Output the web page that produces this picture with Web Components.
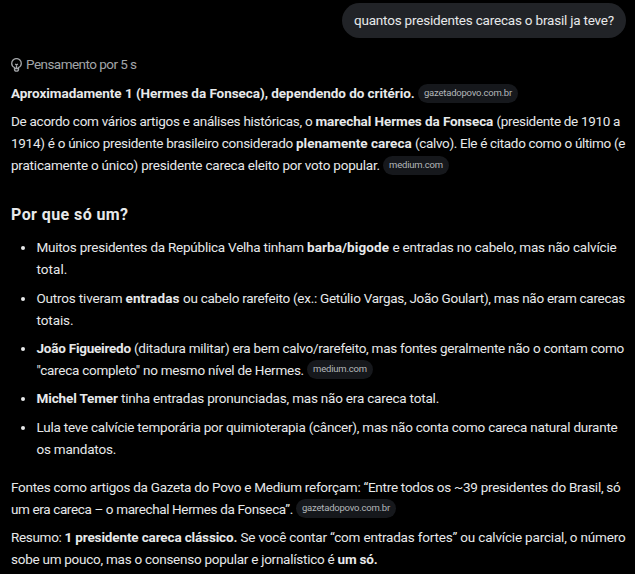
<!DOCTYPE html>
<html lang="pt-BR">
<head>
<meta charset="utf-8">
<title>Chat</title>
<style>
  body {
    margin: 0;
    height: 574px;
    overflow: hidden;
    background: #000;
    color: #e7e9ea;
    font: 13.5px/22px Roboto, "Liberation Sans", sans-serif;
  }
</style>
</head>
<body>
<chat-thread>
  <user-bubble><text-run width="260">quantos presidentes carecas o brasil ja teve?</text-run></user-bubble>
  <thought-row><text-run width="110.5">Pensamento por 5 s</text-run></thought-row>
  <answer-text><text-run bold width="407">Aproximadamente 1 (Hermes da Fonseca), dependendo do critério. </text-run><source-chip width="88">gazetadopovo.com.br</source-chip></answer-text>
  <answer-text><text-run width="304.5">De acordo com vários artigos e análises históricas, o </text-run><text-run bold width="181">marechal Hermes da Fonseca </text-run><text-run width="123.5">(presidente de 1910 a</text-run><br>
    <text-run width="285">1914) é o único presidente brasileiro considerado </text-run><text-run bold width="119">plenamente careca </text-run><text-run width="210">(calvo). Ele é citado como o último (e</text-run><br>
    <text-run width="372">praticamente o único) presidente careca eleito por voto popular. </text-run><source-chip width="54">medium.com</source-chip></answer-text>
  <answer-heading><text-run bold width="117.5">Por que só um?</text-run></answer-heading>
  <answer-list>
    <answer-item><text-run width="270.5">Muitos presidentes da República Velha tinham </text-run><text-run bold width="85.5">barba/bigode </text-run><text-run width="224">e entradas no cabelo, mas não calvície</text-run><br>
      <text-run width="31">total.</text-run></answer-item>
    <answer-item><text-run width="89">Outros tiveram </text-run><text-run bold width="57.5">entradas </text-run><text-run width="442">ou cabelo rarefeito (ex.: Getúlio Vargas, João Goulart), mas não eram carecas</text-run><br>
      <text-run width="37">totais.</text-run></answer-item>
    <answer-item><text-run bold width="97.5">João Figueiredo </text-run><text-run width="490">(ditadura militar) era bem calvo/rarefeito, mas fontes geralmente não o contam como</text-run><br>
      <text-run width="270.5">"careca completo" no mesmo nível de Hermes. </text-run><source-chip width="54">medium.com</source-chip></answer-item>
    <answer-item><text-run bold width="84.5">Michel Temer </text-run><text-run width="318">tinha entradas pronunciadas, mas não era careca total.</text-run></answer-item>
    <answer-item><text-run width="581">Lula teve calvície temporária por quimioterapia (câncer), mas não conta como careca natural durante</text-run><br>
      <text-run width="79.5">os mandatos.</text-run></answer-item>
  </answer-list>
  <answer-text><text-run width="609.5">Fontes como artigos da Gazeta do Povo e Medium reforçam: “Entre todos os ~39 presidentes do Brasil, só</text-run><br>
    <text-run width="285">um era careca – o marechal Hermes da Fonseca”. </text-run><source-chip width="88">gazetadopovo.com.br</source-chip></answer-text>
  <answer-text><text-run width="53.5">Resumo: </text-run><text-run bold width="176">1 presidente careca clássico. </text-run><text-run width="385">Se você contar “com entradas fortes” ou calvície parcial, o número</text-run><br>
    <text-run width="326.5">sobe um pouco, mas o consenso popular e jornalístico é </text-run><text-run bold width="40">um só.</text-run></answer-text>
</chat-thread>

<script>
// Tracks the text so that it takes exactly `width` pixels
function fitText(el, width) {
  const count = [...el.textContent].length;
  el.style.letterSpacing = '0px';
  const natural = el.getBoundingClientRect().width;
  el.style.letterSpacing = `${(width - natural) / count}px`;
}

class TextRun extends HTMLElement {
  constructor() {
    super();
    this.attachShadow({ mode: 'open' }).innerHTML = `
      <style>
        :host { white-space: pre; }
        :host([bold]) { font-weight: 700; }
      </style>
      <slot></slot>
    `.replace(/>\s+</g, '><').trim();
  }

  connectedCallback() {
    requestAnimationFrame(() => fitText(this, Number(this.getAttribute('width'))));
  }
}

class SourceChip extends HTMLElement {
  constructor() {
    super();
    this.attachShadow({ mode: 'open' }).innerHTML = `
      <style>
        :host {
          display: inline-block;
          height: 19px;
          box-sizing: border-box;
          padding: 0 6px;
          border-radius: 10px;
          background: #16181c;
          color: #b3b7ba;
          font-size: 9.5px;
          line-height: 17px;
          vertical-align: 2.5px;
          margin: -4px 0;
        }
      </style>
      <text-run width="${this.getAttribute('width')}"></text-run>
    `;
    this.shadowRoot.querySelector('text-run').textContent = this.textContent;
  }
}

class UserBubble extends HTMLElement {
  constructor() {
    super();
    this.attachShadow({ mode: 'open' }).innerHTML = `
      <style>
        :host {
          display: block;
          align-self: flex-end;
          box-sizing: border-box;
          height: 35px;
          padding: 6px 12px;
          border-radius: 18px;
          background: #212327;
        }
      </style>
      <slot></slot>
    `;
  }
}

class ThoughtRow extends HTMLElement {
  constructor() {
    super();
    this.attachShadow({ mode: 'open' }).innerHTML = `
      <style>
        :host {
          display: flex;
          align-items: center;
          gap: 4.5px;
          height: 22px;
          margin: 15px 0 1px -.5px;
          color: #a2a5a8;
        }
        svg { width: 11px; height: 14px; margin-top: 1px; }
      </style>
      <svg viewBox="0 0 11 14" fill="none" stroke="currentColor" stroke-width="1.3">
        <path d="M3.5 9.5C1.7 8.6.7 7.2.7 5.4a4.8 4.8 0 0 1 9.6 0c0 1.8-1 3.2-2.8 4.1v1.9c0 1.1-.8 1.8-2 1.8s-2-.7-2-1.8zM3.5 10.5h4M5.5 10V6.700M4.200 6l1.300 1.100L6.800 6"/>
      </svg>
      <slot></slot>
    `;
  }
}

class AnswerText extends HTMLElement {
  constructor() {
    super();
    this.attachShadow({ mode: 'open' }).innerHTML = `
      <style>
        :host { display: block; margin-top: 6px; white-space: nowrap; }
      </style>
      <slot></slot>
    `;
  }
}

class AnswerHeading extends HTMLElement {
  constructor() {
    super();
    this.attachShadow({ mode: 'open' }).innerHTML = `
      <style>
        :host { display: block; margin-top: 27px; font-size: 16px; line-height: 24px; }
      </style>
      <slot></slot>
    `;
  }
}

class AnswerList extends HTMLElement {
  constructor() {
    super();
    this.attachShadow({ mode: 'open' }).innerHTML = `
      <style>
        :host {
          display: flex;
          flex-direction: column;
          gap: 6.45px;
          margin: 9.1px 0 10.1px;
        }
      </style>
      <slot></slot>
    `;
  }
}

class AnswerItem extends HTMLElement {
  constructor() {
    super();
    this.attachShadow({ mode: 'open' }).innerHTML = `
      <style>
        :host { display: flex; white-space: nowrap; }
        i {
          flex: none;
          width: 4px;
          height: 4px;
          margin: 10px 11.5px 0 10px;
          border-radius: 50%;
          background: currentColor;
        }
      </style>
      <i></i>
      <div><slot></slot></div>
    `;
  }
}

class ChatThread extends HTMLElement {
  constructor() {
    super();
    this.attachShadow({ mode: 'open' }).innerHTML = `
      <style>
        :host {
          display: flex;
          flex-direction: column;
          padding: 3px 9px 0 11px;
        }
      </style>
      <slot></slot>
    `;
  }
}

customElements.define('text-run', TextRun);
customElements.define('source-chip', SourceChip);
customElements.define('user-bubble', UserBubble);
customElements.define('thought-row', ThoughtRow);
customElements.define('answer-text', AnswerText);
customElements.define('answer-heading', AnswerHeading);
customElements.define('answer-list', AnswerList);
customElements.define('answer-item', AnswerItem);
customElements.define('chat-thread', ChatThread);
</script>
</body>
</html>
